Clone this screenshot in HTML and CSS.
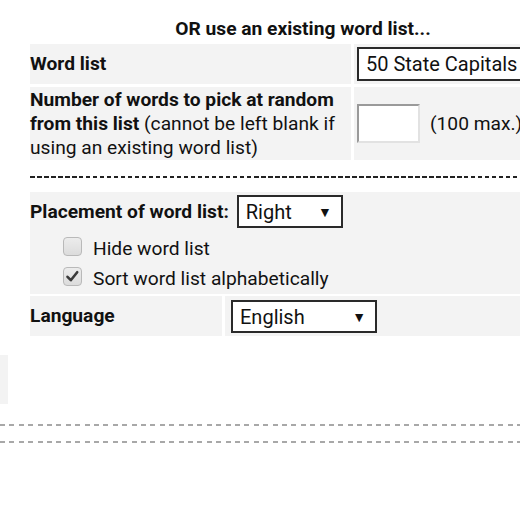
FILE: index.html
```html
<!DOCTYPE html>
<html>
<head>
<meta charset="utf-8">
<link rel="stylesheet" href="styles.css">
</head>
<body>
<div class="form">
  <div class="heading">OR use an existing word list...</div>
  <div class="grid">
    <div class="cell label">Word list</div>
    <div class="cell value"><div class="select wide"><span>50 State Capitals</span><span class="arrow">▼</span></div></div>
    <div class="cell label multi"><b>Number of words to pick at random<br>from this list</b> (cannot be left blank if<br>using an existing word list)</div>
    <div class="cell value mid"><span class="input"></span><span class="note">(100 max.)</span></div>
  </div>
  <div class="dash"></div>
  <div class="options">
    <div class="place"><span class="label">Placement of word list:</span><div class="select small"><span>Right</span><span class="arrow">▼</span></div></div>
    <div class="checks">
      <div class="check"><span class="box"></span><span class="ctext">Hide word list</span></div>
      <div class="check"><span class="box"><svg viewBox="0 0 19 19" width="19" height="19"><path d="M4.5 9.8 L7.8 13.2 L14.2 5.2" fill="none" stroke="#3a3a3a" stroke-width="2.6" stroke-linecap="round" stroke-linejoin="round"/></svg></span><span class="ctext">Sort word list alphabetically</span></div>
    </div>
  </div>
  <div class="lang">
    <div class="cell label">Language</div>
    <div class="cell langval"><div class="select medium"><span>English</span><span class="arrow">▼</span></div></div>
  </div>
</div>
<div class="stub"></div>
<div class="gdash first"></div>
<div class="gdash second"></div>
</body>
</html>
```
FILE: styles.css
```css
html, body {
  margin: 0;
  padding: 0;
  overflow: hidden;
  background: #fff;
}
body {
  font-family: Roboto, "Noto Sans", sans-serif;
  font-size: 19.2px;
  line-height: 24px;
  color: #111;
}
.form {
  margin-left: 30px;
  width: 546px;
}
.heading {
  padding-top: 17px;
  text-align: center;
  font-weight: bold;
  margin-bottom: 3px;
}
.grid {
  display: grid;
  grid-template-columns: 321px 1fr;
  gap: 3px;
}
.cell {
  background: #f3f3f3;
}
.label {
  font-weight: bold;
}
.grid .label {
  display: flex;
  align-items: center;
}
.grid .label.multi {
  display: block;
  font-weight: normal;
  padding-top: 1px;
}
.value {
  padding: 3px;
  display: flex;
  align-items: center;
}
.value.mid {
  gap: 10px;
}
.select {
  box-sizing: border-box;
  height: 34px;
  border: 2px solid #2a2a2a;
  background: #fff;
  font-size: 20px;
  display: flex;
  align-items: center;
  justify-content: space-between;
  padding: 0 9px 0 7px;
}
.select .arrow {
  font-size: 14px;
}
.select.wide {
  width: 190px;
}
.select.small {
  width: 106px;
  height: 33px;
}
.select.medium {
  width: 146px;
  height: 33px;
}
.input {
  display: block;
  box-sizing: border-box;
  width: 63px;
  height: 39px;
  background: #fff;
  border: 2px solid;
  border-color: #9a9a9a #e2e2e2 #e2e2e2 #9a9a9a;
}
.dash {
  margin-top: 16px;
  height: 2px;
  background: repeating-linear-gradient(to right, #222 0 4.5px, transparent 4.5px 7px);
  margin-bottom: 14px;
}
.options {
  background: #f3f3f3;
  padding: 3px 0;
}
.place {
  display: flex;
  align-items: center;
  gap: 8px;
  height: 33px;
}
.checks {
  padding-top: 3px;
}
.check {
  display: flex;
  align-items: center;
  gap: 11px;
  height: 30px;
  padding-left: 33px;
}
.ctext {
  padding-top: 6px;
}
.box {
  display: block;
  box-sizing: border-box;
  width: 19px;
  height: 19px;
  border: 1px solid #b9b9b9;
  border-radius: 4px;
  background: linear-gradient(#ececec, #dcdcdc);
  position: relative;
}
.box svg {
  position: absolute;
  left: -1px;
  top: -1px;
}
.lang {
  margin-top: 2px;
  display: grid;
  grid-template-columns: 192px 1fr;
  gap: 3px;
}
.lang .label {
  display: flex;
  align-items: center;
}
.langval {
  padding: 4px 6px 3px;
}
.stub {
  margin-top: 19px;
  width: 8px;
  height: 49px;
  background: #f3f3f3;
}
.gdash {
  height: 2px;
  background: repeating-linear-gradient(to right, #a8a8a8 0 5px, transparent 5px 9.4px);
}
.gdash.first {
  margin-top: 20px;
}
.gdash.second {
  margin-top: 15px;
}
```
